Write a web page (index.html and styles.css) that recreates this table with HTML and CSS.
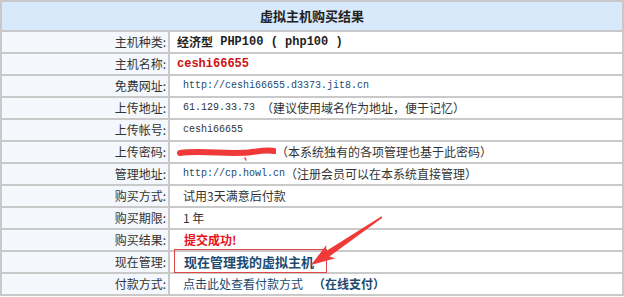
FILE: index.html
```html
<!DOCTYPE html>
<html lang="zh-CN">
<head>
<meta charset="utf-8">
<title>虚拟主机购买结果</title>
<link rel="stylesheet" href="styles.css">
</head>
<body>
<div class="page">
  <table class="result">
    <colgroup><col class="c-label"><col class="c-value"></colgroup>
    <thead>
      <tr><th colspan="2" class="title">虚拟主机购买结果</th></tr>
    </thead>
    <tbody>
      <tr><td class="label">主机种类:</td><td class="value"><span class="b dark">经济型</span><span class="mono-b dark"> PHP100 ( php100 )</span></td></tr>
      <tr><td class="label">主机名称:</td><td class="value"><span class="mono-b red">ceshi66655</span></td></tr>
      <tr><td class="label">免费网址:</td><td class="value"><span class="indent mono blue">http://ceshi66655.d3373.jit8.cn</span></td></tr>
      <tr><td class="label">上传地址:</td><td class="value"><span class="indent mono">61.129.33.73 </span><span>（建议使用域名作为地址，便于记忆）</span></td></tr>
      <tr><td class="label">上传帐号:</td><td class="value"><span class="indent mono">ceshi66655</span></td></tr>
      <tr><td class="label">上传密码:</td><td class="value"><svg class="scribble" width="99" height="20" viewBox="0 0 99 20"><path d="M3 11 C 25 8, 55 13, 75 10 S 94 9, 97 9" fill="none" stroke="#f03a3a" stroke-width="6" stroke-linecap="round"/><path d="M68 16 l1 2" stroke="#f03a3a" stroke-width="1.5" stroke-linecap="round"/></svg><span>（本系统独有的各项管理也基于此密码）</span></td></tr>
      <tr><td class="label">管理地址:</td><td class="value"><span class="indent mono blue">http://cp.howl.cn</span><span>（注册会员可以在本系统直接管理）</span></td></tr>
      <tr><td class="label">购买方式:</td><td class="value"><span class="indent">试用3天满意后付款</span></td></tr>
      <tr><td class="label">购买期限:</td><td class="value"><span class="indent">1 年</span></td></tr>
      <tr><td class="label">购买结果:</td><td class="value"><span class="indent-b b bright-red">提交成功!</span></td></tr>
      <tr><td class="label">现在管理:</td><td class="value"><span class="indent-b b blue big">现在管理我的虚拟主机</span></td></tr>
      <tr><td class="label">付款方式:</td><td class="value"><span class="indent blue">点击此处查看付款方式</span><span class="pay b blue">（在线支付）</span></td></tr>
    </tbody>
  </table>
  <svg class="annot" width="624" height="297" viewBox="0 0 624 297">
    <rect x="174.5" y="249.5" width="152" height="23" fill="none" stroke="#e04848" stroke-width="1"/>
    <polygon points="311,265 335.4,258.2 329.4,256.5 382.4,217.7 381.6,216.3 325.8,251.2 326.4,245" fill="#f03a3a"/>
  </svg>
</div>
</body>
</html>
```
FILE: styles.css
```css
html, body {
  margin: 0;
  padding: 0;
  background: #ffffff;
}
.page {
  position: relative;
  width: 624px;
  height: 297px;
  overflow: hidden;
  font-family: "Noto Sans CJK SC", "Liberation Sans", sans-serif;
  font-size: 12px;
  color: #333333;
}
.result {
  width: 624px;
  border-collapse: separate;
  border-spacing: 2px;
  background: #c9c9c9;
  table-layout: fixed;
}
.c-label { width: 166px; }
.c-value { width: 452px; }
.title {
  height: 28px;
  padding: 0;
  background: #d8e9fb;
  font-size: 13px;
  font-weight: bold;
  color: #222222;
  text-align: center;
  line-height: 28px;
}
.result td {
  height: 20px;
  max-height: 20px;
  padding: 0;
  line-height: 20px;
  white-space: nowrap;
  overflow: hidden;
}
.result td > span,
.result td > svg {
  display: inline-block;
  vertical-align: top;
  height: 20px;
  line-height: 20px;
}
.label {
  background: #f4f7fb;
  text-align: right;
  padding-right: 2px !important;
  color: #333333;
}
.value {
  background: #ffffff;
  padding-left: 7px !important;
}
.indent { margin-left: 6px; }
.indent-b { margin-left: 7px; }
.b { font-weight: bold; }
.big { font-size: 13px; }
.mono {
  font-family: "Liberation Mono", "DejaVu Sans Mono", monospace;
  font-size: 10px;
  white-space: pre;
}
.mono-b {
  font-family: "Liberation Mono", "DejaVu Sans Mono", monospace;
  font-size: 12px;
  font-weight: bold;
  white-space: pre;
}
.dark { color: #222222; }
.red { color: #cc1111; }
.bright-red { color: #e8131a; }
.blue { color: #1d4a6e; }
.pay { margin-left: 10px; }
.annot {
  position: absolute;
  left: 0;
  top: 0;
  pointer-events: none;
}
```
